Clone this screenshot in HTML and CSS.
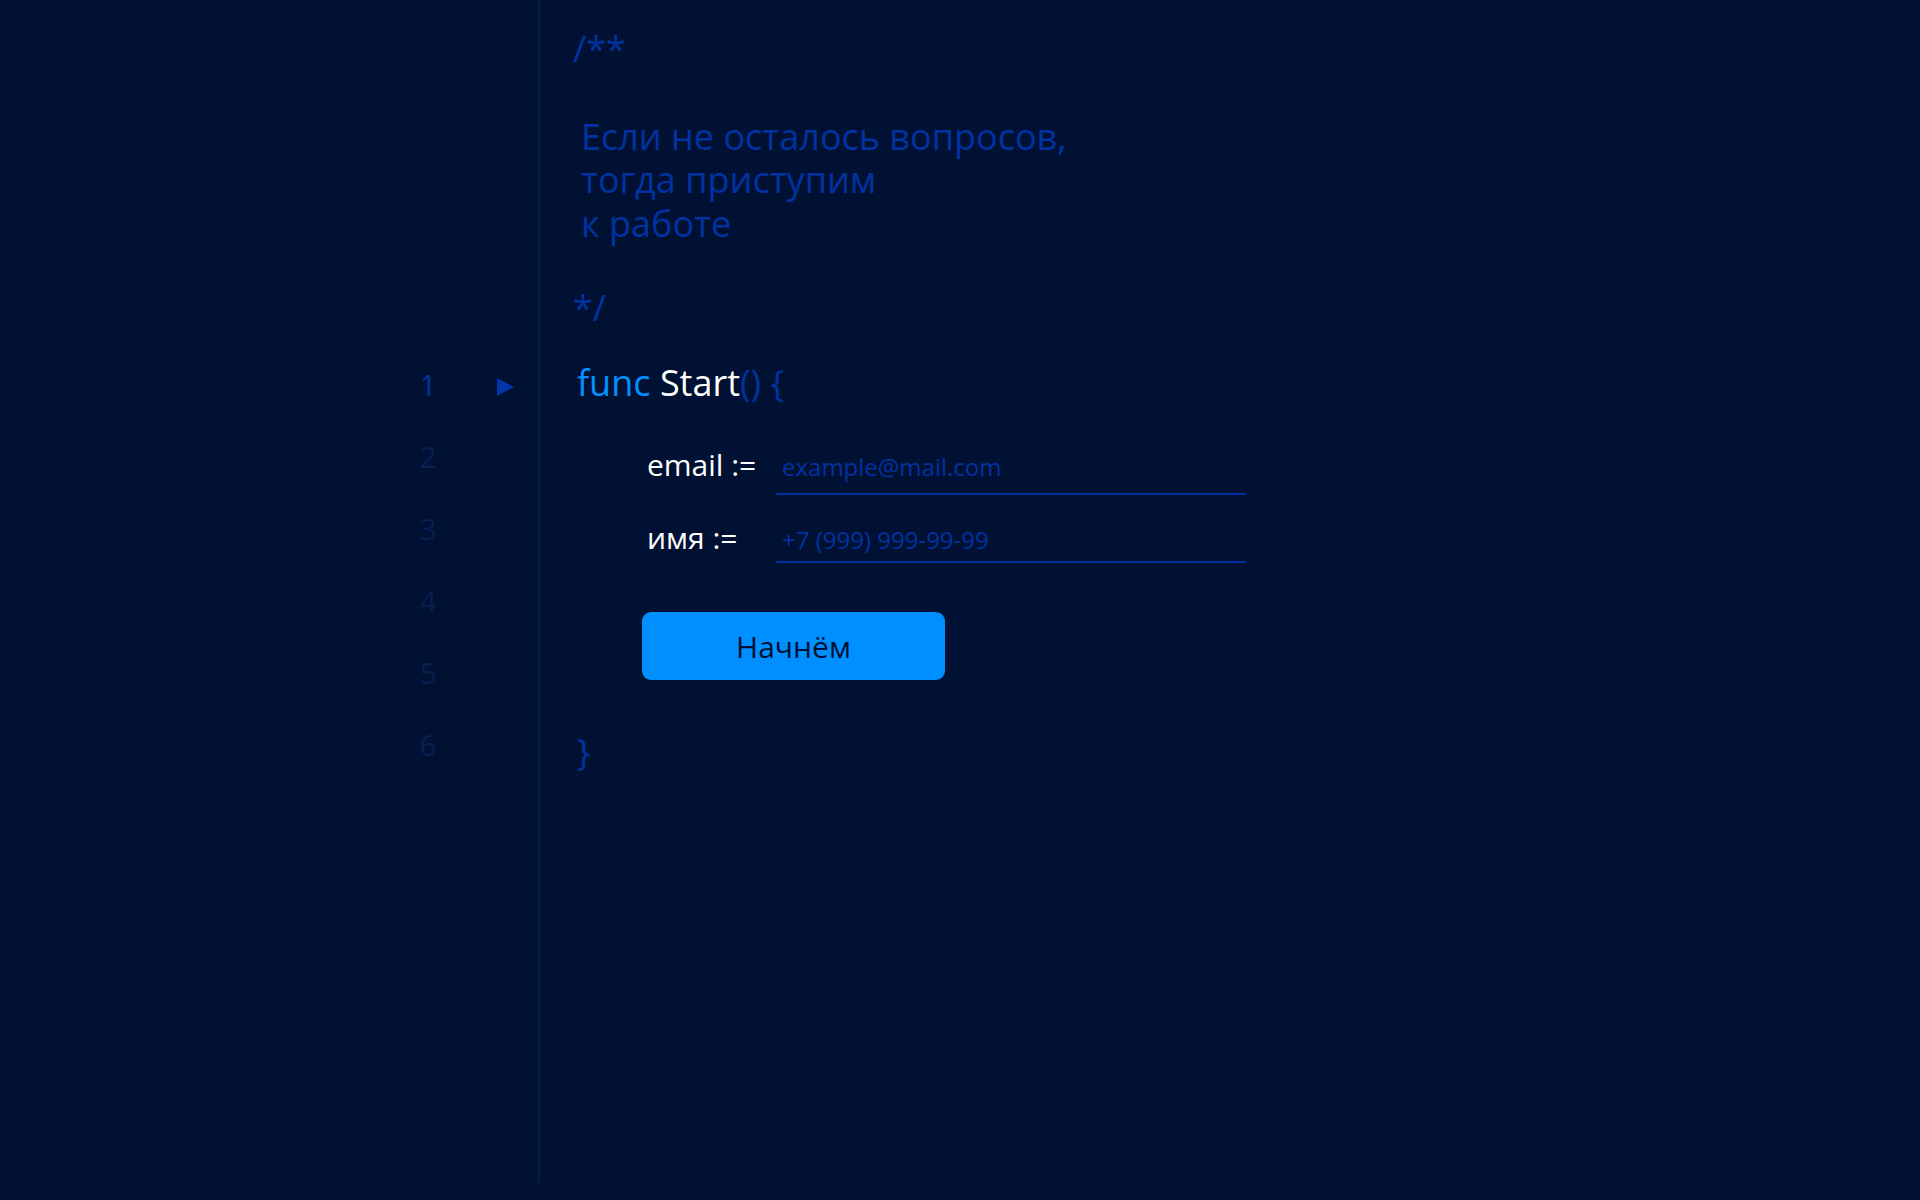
FILE: index.html
```html
<!DOCTYPE html>
<html lang="ru">
<head>
<meta charset="utf-8">
<title>Start</title>
<link rel="stylesheet" href="styles.css">
</head>
<body>
<div class="editor">
  <div class="gutter">
    <div class="ln ln-active"><span class="num">1</span><svg class="arrow" width="17" height="18" viewBox="0 0 17 18"><polygon points="0,0 17,9 0,18"/></svg></div>
    <div class="ln"><span class="num">2</span></div>
    <div class="ln"><span class="num">3</span></div>
    <div class="ln"><span class="num">4</span></div>
    <div class="ln"><span class="num">5</span></div>
    <div class="ln"><span class="num">6</span></div>
  </div>
  <div class="code">
    <div class="comment">/**</div>
    <p class="doc">Если не осталось вопросов,<br>тогда приступим<br>к работе</p>
    <div class="comment">*/</div>
    <div class="func"><span class="kw">func</span> <span class="name">Start</span><span class="punct">() {</span></div>
    <form class="fields" onsubmit="return false">
      <label class="field"><span class="label">email :=</span><input class="input" type="text" placeholder="example@mail.com"></label>
      <label class="field"><span class="label">имя :=</span><input class="input input-tight" type="text" placeholder="+7 (999) 999-99-99"></label>
    </form>
    <button class="btn" type="button">Начнём</button>
    <div class="close">}</div>
  </div>
</div>
</body>
</html>
```
FILE: styles.css
```css
* { box-sizing: border-box; }
html, body {
  margin: 0;
  padding: 0;
  background: #001134;
  height: 100%;
}
body {
  font-family: "Open Sans", "Noto Sans", sans-serif;
  color: #0033a0;
}
.editor {
  display: flex;
  height: 1183px;
}
.gutter {
  width: 540px;
  flex: none;
  border-right: 2px solid #071c4a;
  padding-top: 349px;
  padding-left: 400px;
}
.ln {
  display: flex;
  align-items: center;
  height: 72px;
  font-size: 30px;
  line-height: 72px;
  color: #081f50;
}
.ln-active { color: #0033a0; }
.num {
  width: 56px;
  text-align: center;
}
.arrow {
  margin-left: 41px;
  margin-top: 4px;
  fill: #0036aa;
}
.code {
  flex: 1;
  padding-left: 33px;
  padding-top: 27px;
  font-size: 36px;
  line-height: 43.2px;
}
.comment { color: #0033a0; }
.doc {
  margin: 45px 0 41.4px;
  padding-left: 8px;
  color: #0033a0;
}
.func {
  margin-top: 32px;
  padding-left: 4px;
}
.kw { color: #0090ff; }
.name { color: #ffffff; }
.punct { color: #0033a0; }
.fields {
  margin: 43px 0 0 74px;
  display: flex;
  flex-direction: column;
  gap: 25.5px;
}
.field {
  display: flex;
  align-items: baseline;
}
.label {
  width: 129px;
  flex: none;
  font-size: 30px;
  line-height: 30px;
  color: #ffffff;
}
.input {
  width: 470px;
  height: 47px;
  padding: 0 6px 7px;
  border: none;
  border-bottom: 2px solid #0033a0;
  background: transparent;
  outline: none;
  font-family: "Open Sans", "Noto Sans", sans-serif;
  font-size: 24px;
  color: #ffffff;
}
.input-tight {
  height: 43px;
  padding-bottom: 3px;
}
.input::placeholder {
  color: #0033a0;
  opacity: 1;
}
.btn {
  display: block;
  margin: 49px 0 0 69px;
  width: 303px;
  height: 68px;
  border: none;
  border-radius: 9px;
  background: #008fff;
  color: #001134;
  font-family: "Open Sans", "Noto Sans", sans-serif;
  font-size: 30px;
  cursor: pointer;
}
.close {
  margin-top: 49.5px;
  padding-left: 4px;
  color: #0033a0;
}
```
